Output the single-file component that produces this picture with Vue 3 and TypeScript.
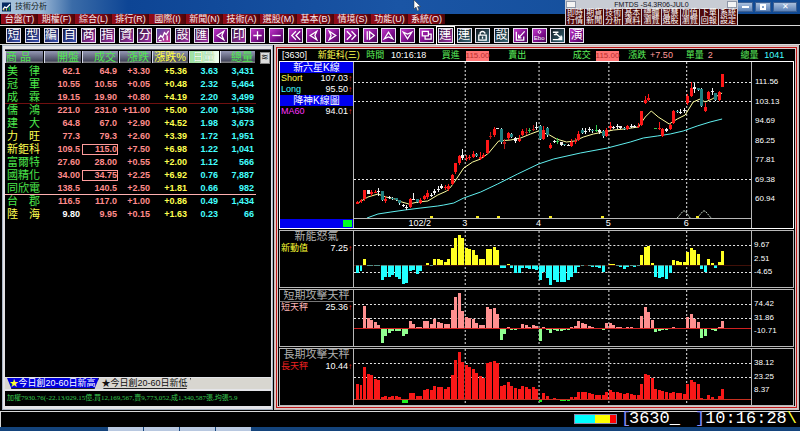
<script setup lang="ts">
interface Tool { label: string; tone: string; glyph?: string; icon?: string; active?: boolean }
interface Quote { name: string; own?: boolean; open: string; flat?: boolean; last: string; boxed?: boolean; diff: string; pct: string; ratio: string; vol: string; rule?: string }
type Candle = [number, number, number, number, number, string]

const menus = ['台盤(T)', '期權(F)', '綜合(L)', '排行(R)', '國際(I)', '新聞(N)', '技術(A)', '選股(M)', '基本(B)', '情境(S)', '功能(U)', '系統(O)']

const arrows: Record<string, string> = {
  left: 'M10.500 2.500 3.500 7 10.500 11.500 8.500 7Z',
  right: 'M3.500 2.500 10.500 7 3.500 11.500 5.500 7Z',
  first: 'M7.500 2.500 3 7 7.500 11.500M12 2.500 7.500 7 12 11.500',
  last: 'M2 2.500 6.500 7 2 11.500M7 2.500 11.500 7 7 11.500',
  play: 'M3.500 2.500V11.500M6 3 11 7 6 11Z',
  up: 'M2.500 10.500 7 3.500 11.500 10.500 7 8.500Z',
  down: 'M2.500 3.500 7 10.500 11.500 3.500 7 5.500Z',
  plus: 'M7 2.500V11.500M2.500 7H11.500',
  minus: 'M2.500 7H11.500',
  copy: 'M2.500 2.500H9V7.500H2.500ZM5.500 8V11H12V5.500H9',
  wave: 'M1.500 11 4 7 6 9 8 4 10 6 12.500 2M2 12.500H5M7 10V12.500M11 7V12',
  lock: 'M4.500 6.500V4Q7 1.500 9.500 4V5M3 6.500H11V12H3ZM7 8V10.500',
  edit: 'M2.500 3V12H10.500V8M5.500 9 11.500 2.500M5 6V9.500H8',
  user: 'M5 3.500Q7 0.500 9 3.500Q9 6 7 6Q5 6 5 3.500',
  pointer: 'M2 3.500H8M3 6H6M2 11.500H11.500V8M5 4.500 11 10M8 10.500H11V7',
}

const tools: Tool[] = [
  { label: '短線', tone: 'blue', glyph: '短' }, { label: '型態', tone: 'blue', glyph: '型' },
  { label: '編輯', tone: 'blue', glyph: '編' }, { label: '自選', tone: 'blue', glyph: '自' },
  { label: '商品', tone: 'plum', glyph: '商' }, { label: '指標', tone: 'plum', glyph: '指' },
  { label: '資料', tone: 'plum', glyph: '資' }, { label: '分時', tone: 'plum', glyph: '分' },
  { label: '走勢', tone: 'rose', icon: 'wave' }, { label: '設定', tone: 'plum', glyph: '設' },
  { label: '匯出', tone: 'plum', glyph: '匯' }, { label: '返回', tone: 'violet', icon: 'left' },
  { label: '列印', tone: 'plum', glyph: '印' }, { label: '放大', tone: 'violet', icon: 'plus' },
  { label: '縮小', tone: 'violet', icon: 'minus' }, { label: '最前', tone: 'violet', icon: 'first' },
  { label: '向前', tone: 'violet', icon: 'left' }, { label: '向後', tone: 'violet', icon: 'right' },
  { label: '最後', tone: 'violet', icon: 'last' }, { label: '播放', tone: 'violet', icon: 'play' },
  { label: '向上', tone: 'violet', icon: 'up' }, { label: '向下', tone: 'violet', icon: 'down' },
  { label: '複製', tone: 'violet', icon: 'copy' }, { label: '連動', tone: 'plum', glyph: '連', active: true },
  { label: '連線', tone: 'teal', glyph: '連' }, { label: '鎖定', tone: 'teal', icon: 'lock' },
  { label: '畫線設定', tone: 'teal', glyph: '設' }, { label: '畫線', tone: 'violet', icon: 'edit' },
  { label: '電子書', tone: 'violet', icon: 'user', glyph: 'Ebo' }, { label: '指向', tone: 'teal', icon: 'pointer' },
  { label: '演算', tone: 'violet', glyph: '演' },
]

const shortcuts = [['即時', '行情'], ['期貨', '新聞'], ['技術', '分析'], ['基本', '資料'], ['總體', '瀏覽'], ['智慧', '選股'], ['加值', '瀏覽'], ['下單', '回報'], ['系統', '設定']]

const heads = ['商 品', '開盤', '成交', '漲跌', '漲跌%', '日量', '總量']
const quotes: Quote[] = [
  { name: '美　律', open: '62.1', last: '64.9', diff: '+3.30', pct: '+5.36', ratio: '3.63', vol: '3,431' },
  { name: '冠　軍', open: '10.55', last: '10.55', diff: '+0.05', pct: '+0.48', ratio: '2.32', vol: '5,464' },
  { name: '成　霖', open: '19.15', last: '19.90', diff: '+0.80', pct: '+4.19', ratio: '2.20', vol: '3,499', rule: 'dim' },
  { name: '儒　鴻', open: '221.0', last: '231.0', diff: '+11.00', pct: '+5.00', ratio: '2.00', vol: '1,536' },
  { name: '建　大', open: '64.8', last: '67.0', diff: '+2.90', pct: '+4.52', ratio: '1.98', vol: '3,673' },
  { name: '力　旺', own: true, open: '77.3', last: '79.3', diff: '+2.60', pct: '+3.39', ratio: '1.72', vol: '1,951' },
  { name: '新鉅科', own: true, open: '109.5', last: '115.0', boxed: true, diff: '+7.50', pct: '+6.98', ratio: '1.22', vol: '1,041' },
  { name: '富爾特', open: '27.60', last: '28.00', diff: '+0.55', pct: '+2.00', ratio: '1.12', vol: '566' },
  { name: '國精化', open: '34.00', last: '34.75', boxed: true, diff: '+2.25', pct: '+6.92', ratio: '0.76', vol: '7,887' },
  { name: '同欣電', open: '138.5', last: '140.5', diff: '+2.50', pct: '+1.81', ratio: '0.66', vol: '982', rule: 'bright' },
  { name: '台　郡', open: '116.5', last: '117.0', diff: '+1.00', pct: '+0.86', ratio: '0.49', vol: '1,434' },
  { name: '陸　海', own: true, open: '9.80', flat: true, last: '9.95', diff: '+0.15', pct: '+1.63', ratio: '0.23', vol: '66' },
]

const left = 353
const plotWidth = 398
const barX = (i: number): number => 355 + 3.52 * i
const months = [{ x: 419, text: '102/2' }, { x: 464, text: '3' }, { x: 538, text: '4' }, { x: 608, text: '5' }, { x: 686, text: '6' }]
const gridX = [464, 538, 608, 686]
const percent = (x: number): string => `${((x - left) / plotWidth) * 100}%`

// index, high, body top, body bottom, low, colour key
const candles: Candle[] = [
  [0, 201, 202, 204, 204, 'r'], [1, 199, 200, 202, 203, 'r'], [2, 190, 190, 199, 201, 'r'], [3, 190, 190, 194, 194, 'w'],
  [4, 190, 192, 194, 196, 'r'], [5, 190, 192, 192, 193, 'r'], [6, 188, 191, 191, 196, 'w'], [7, 191, 191, 200, 201, 't'],
  [8, 196, 199, 201, 203, 'r'], [9, 196, 197, 198, 199, 'w'], [10, 197, 198, 199, 200, 't'], [11, 198, 198, 200, 201, 't'],
  [12, 200, 200, 203, 205, 't'], [13, 204, 205, 206, 207, 'w'], [14, 205, 207, 208, 210, 'w'], [15, 198, 199, 207, 208, 'r'],
  [16, 193, 199, 199, 200, 'w'], [17, 199, 199, 202, 203, 't'], [18, 198, 200, 203, 204, 'r'], [19, 195, 196, 199, 200, 'r'],
  [20, 190, 193, 197, 199, 'r'], [21, 193, 195, 196, 197, 'w'], [22, 189, 191, 193, 195, 'w'], [23, 186, 189, 190, 192, 'w'],
  [24, 184, 186, 188, 189, 'w'], [25, 185, 187, 188, 190, 'r'], [26, 184, 186, 189, 191, 'r'], [27, 174, 175, 184, 185, 'r'],
  [28, 163, 163, 172, 174, 'r'], [29, 155, 156, 163, 165, 'r'], [30, 149, 155, 158, 160, 'w'], [31, 155, 158, 159, 161, 'r'],
  [32, 155, 157, 158, 160, 'r'], [33, 151, 154, 157, 158, 'r'], [34, 153, 154, 156, 157, 't'], [35, 152, 157, 159, 160, 'r'],
  [36, 153, 155, 157, 158, 'r'], [37, 140, 140, 153, 154, 'r'], [38, 132, 136, 137, 139, 'd'], [39, 127, 129, 135, 137, 'r'],
  [40, 128, 128, 129, 129, 'w'], [41, 128, 129, 142, 144, 't'], [42, 139, 142, 144, 149, 'd'], [43, 132, 133, 138, 140, 'r'],
  [44, 133, 134, 137, 138, 't'], [45, 137, 138, 141, 143, 'w'], [46, 135, 139, 141, 142, 'r'], [47, 129, 131, 135, 136, 'r'],
  [48, 128, 132, 133, 135, 'd'], [49, 128, 130, 131, 133, 'g'], [50, 125, 129, 130, 131, 'd'], [51, 122, 127, 128, 130, 'w'],
  [52, 125, 126, 139, 140, 't'], [53, 126, 130, 139, 140, 'r'], [54, 127, 128, 135, 137, 't'], [55, 143, 145, 148, 149, 'r'],
  [56, 140, 141, 142, 143, 'w'], [57, 138, 141, 142, 144, 'g'], [58, 142, 142, 145, 146, 'w'], [59, 144, 144, 145, 146, 't'],
  [60, 144, 145, 146, 146, 'w'], [61, 139, 142, 146, 147, 'r'], [62, 138, 141, 142, 144, 'r'], [63, 131, 134, 140, 141, 'r'],
  [64, 128, 130, 133, 134, 't'], [65, 128, 131, 132, 134, 'w'], [66, 127, 129, 130, 132, 'w'], [67, 129, 130, 131, 133, 't'],
  [68, 125, 130, 131, 132, 'g'], [69, 129, 130, 132, 134, 'w'], [70, 130, 131, 136, 138, 't'], [71, 128, 130, 136, 137, 'r'],
  [72, 122, 126, 128, 130, 'r'], [73, 126, 127, 128, 129, 'w'], [74, 124, 126, 127, 129, 'w'], [75, 126, 126, 128, 129, 'w'],
  [76, 127, 128, 129, 130, 't'], [77, 125, 126, 129, 130, 'r'], [78, 124, 126, 127, 128, 'w'], [79, 125, 126, 127, 128, 'w'],
  [80, 123, 126, 127, 128, 'r'], [81, 111, 111, 125, 126, 'r'], [82, 96, 100, 103, 104, 'r'], [83, 94, 98, 100, 101, 'r'],
  [85, 128, 128, 129, 129, 'g'], [86, 122, 128, 129, 130, 'r'], [87, 128, 129, 136, 137, 'r'], [88, 128, 129, 131, 132, 'w'],
  [89, 124, 125, 129, 130, 'r'], [90, 110, 111, 123, 124, 'r'], [91, 110, 111, 112, 113, 't'], [92, 109, 112, 113, 114, 'w'],
  [93, 108, 110, 111, 113, 'w'], [94, 94, 96, 103, 105, 'r'], [95, 82, 88, 96, 97, 'r'], [96, 83, 87, 89, 93, 'w'],
  [97, 88, 88, 90, 91, 't'], [98, 88, 89, 106, 107, 't'], [99, 103, 107, 111, 112, 'r'], [100, 91, 92, 99, 100, 'r'],
  [101, 88, 91, 92, 95, 'w'], [102, 93, 93, 100, 101, 't'], [103, 91, 92, 100, 101, 'r'], [104, 74, 74, 87, 87, 'r'],
]

const shortLine = '357,203 367,197 377,194 385,197 394,199 401,202 408,204 417,202 427,201 437,195 446,191 450,187 455,180 463,168 472,162 480,159 488,153 498,141 510,140 520,138 530,134 538,131 549,135 556,139 566,142 574,141 583,137 593,134 603,132 613,130 624,129 638,127 645,117 651,111 658,117 669,124 677,119 685,115 693,102 700,99 705,102 712,99 722,93'
const longLine = '366,218 377,214 390,212 404,210 420,208 437,206 443,205 453,203 463,198 480,192 497,184 517,174 538,164 553,159 580,153 607,148 630,142 643,138 657,136 670,134 683,131 697,126 710,122 722,119'
const marks = [429, 475, 496, 548, 601, 696]

const strengths = [
  { title: '新能怒氣', name: '新動值', value: '7.25', cls: 'power', zero: 34, grid: [15, 42], axis: ['9.67', '2.51', '-4.65'],
    data: [-8, -6, 6, -1, -1, -1, -1, -15, -12, -12, -10, -12, -14, -19, -18, -6, -5, -9, -6, 0, 2, -1, 6, 6, 5, 3, 6, 17, 27, 30, 27, 17, 16, 15, 10, 6, 6, 16, 16, 18, 15, -3, -3, 1, -3, -8, -8, -3, -3, -4, -4, -5, -15, -7, -13, -20, -15, -17, -17, -17, -15, -12, -8, -2, -1, 0, -1, -2, -2, -3, -7, 0, 1, 1, -1, -2, -4, -2, -1, -2, -1, 10, 18, 19, 2, -12, -13, -12, -14, -8, 5, 4, 3, 3, 13, 17, 15, 11, -4, -7, 6, 2, -3, 3, 14] },
  { title: '短期攻擊天秤', name: '短天秤', value: '25.36', cls: 'swift', zero: 38, grid: [15, 29], axis: ['74.42', '31.86', '-10.71'],
    data: [-1, 0, 22, 10, 8, 6, 3, -15, -8, -5, -3, -3, -3, -8, -6, 7, 4, 1, 1, 7, 7, 4, 9, 6, 5, 4, 4, 18, 31, 35, 17, 11, 10, 9, 5, 3, 3, 21, 19, 20, 14, -12, -6, 1, -2, -2, -1, 4, 3, 1, 3, 2, -13, 1, -2, -5, -2, -3, -3, -2, -2, 1, 2, 7, 5, 4, 2, 1, 0, 0, -2, 5, 5, 3, 1, 1, 0, 1, 1, 0, 0, 12, 21, 16, 8, -4, -3, -2, -2, -1, 1, 0, 0, 0, 11, 14, 9, 6, -10, -8, 0, -2, -3, 1, 7] },
  { title: '長期攻擊天秤', name: '長天秤', value: '10.44', cls: 'slow', zero: 50, grid: [15, 29], axis: ['38.12', '23.25', '8.37'],
    data: [15, 14, 32, 25, 24, 20, 19, 2, 3, 2, 3, 3, 2, -4, -4, 6, 6, 3, 3, 9, 10, 9, 13, 12, 12, 10, 12, 24, 39, 47, 37, 34, 32, 30, 26, 23, 21, 36, 37, 38, 36, 13, 14, 17, 13, 11, 10, 13, 12, 10, 12, 10, -3, 6, 3, 0, 1, 0, -2, -2, -2, 2, 2, 7, 7, 7, 6, 5, 4, 4, 4, 7, 9, 7, 7, 6, 5, 6, 5, 4, 4, 15, 25, 24, 21, 10, 9, 8, 7, 6, 7, 6, 6, 5, 15, 19, 17, 15, 1, 0, 4, 2, 0, 3, 10] },
]
const priceAxis = ['111.56', '103.13', '94.69', '86.25', '77.81', '69.38', '60.94']
</script>

<template>
  <div class="app">
    <header class="titlebar">
      <svg class="logo" viewBox="0 0 10 10" aria-hidden="true">
        <rect width="10" height="10" fill="#062a60" />
        <path d="M1 8 3 5 5 6 9 2" fill="none" stroke="#fff" stroke-width="1.500" />
        <path d="M2 9V7M5 9V7" stroke="#ffe030" />
        <path d="M8 9V5" stroke="#20d040" />
      </svg>
      <h1>技術分析</h1>
      <div class="winctl">
        <button type="button" aria-label="最小化"><i class="min"></i></button>
        <button type="button" aria-label="還原"><i class="restore"></i></button>
        <button type="button" aria-label="關閉" class="close">✕</button>
      </div>
    </header>

    <nav class="menubar">
      <button v-for="m in menus" :key="m" type="button">{{ m }}</button>
    </nav>

    <div class="toolbar">
      <div class="tools">
        <button v-for="t in tools" :key="t.label" type="button" :aria-label="t.label" :class="[t.tone, { active: t.active, mini: t.glyph === 'Ebo' }]">
          <svg v-if="t.icon" viewBox="0 0 14 14" aria-hidden="true"><path :d="arrows[t.icon]" /></svg>
          <span v-if="t.glyph">{{ t.glyph }}</span>
        </button>
      </div>
    </div>

    <aside class="float">
      <div class="float-title"><i></i><span>FMTDS -S4.3R06-JUL0</span><i></i></div>
      <div class="float-keys">
        <button v-for="s in shortcuts" :key="s[1] + s[0]" type="button"><span>{{ s[0] }}</span><span>{{ s[1] }}</span></button>
      </div>
    </aside>
    <svg class="cursor" viewBox="0 0 8 12" aria-hidden="true"><path d="M1 0V9L3 7 4.500 11 6 10 4.500 6.500H7.500Z" fill="#fff" stroke="#333" stroke-width="0.500" /></svg>

    <main class="work">
      <section class="list">
        <div class="sheet">
          <table>
            <colgroup><col class="c0"><col class="c1"><col class="c2"><col class="c3"><col class="c4"><col class="c5"><col class="c6"><col></colgroup>
            <thead>
              <tr>
                <th v-for="(h, i) in heads" :key="h" scope="col" :class="{ pct: i === 4, sorted: i === 5, first: i === 0 }"><span>{{ h }}</span></th>
                <td class="thumbs"><button type="button" aria-label="欄位捲動">≋</button></td>
              </tr>
            </thead>
            <tbody>
              <tr v-for="q in quotes" :key="q.name" :class="q.rule">
                <th scope="row" :class="{ own: q.own }">{{ q.name }}</th>
                <td :class="{ flat: q.flat }">{{ q.open }}</td>
                <td><span :class="{ boxed: q.boxed }">{{ q.last }}</span></td>
                <td>{{ q.diff }}</td>
                <td class="yellow">{{ q.pct }}</td>
                <td class="cyan">{{ q.ratio }}</td>
                <td class="cyan">{{ q.vol }}</td>
                <td class="void"></td>
              </tr>
            </tbody>
          </table>
        </div>
        <div class="tabs">
          <button type="button" class="tab on"><b>★</b>今日創20-60日新高</button>
          <button type="button" class="tab"><b>★</b>今日創20-60日新低</button>
        </div>
        <p class="ticker">加權7930.76(-22.13/029.15億,買12,169,567,賣9,773,052,成1,340,587張,均張5.9</p>
      </section>

      <section class="chart">
        <div class="info">
          <span>[3630]</span><span class="yellow">新鉅科(三)</span><span class="green">時間</span><span>10:16:18</span>
          <span class="green">買進</span><span><mark>115.00</mark></span><span class="green">賣出</span>
          <span class="green">成交</span><span><mark>115.00</mark></span><span class="green">漲跌</span><span class="pink">+7.50</span>
          <span class="green">單量</span><span class="pink">2</span><span class="green">總量</span><span class="cyan">1041</span>
        </div>

        <div class="pane price">
          <div class="legend">
            <h2>新六星K線</h2>
            <p><span class="yellow">Short</span><span>107.03<em>↑</em></span></p>
            <p><span class="cyan">Long</span><span>95.50<em>↑</em></span></p>
            <h2>降神K線圖</h2>
            <p><span class="magenta">MA60</span><span>94.01<em>↑</em></span></p>
            <div class="slider"><i></i></div>
          </div>
          <div class="plot">
            <svg viewBox="353 62 398 156" preserveAspectRatio="none" role="img" aria-label="日K線圖">
              <g class="grid">
                <path v-for="y in [82, 101, 179]" :key="y" :d="`M353 ${y + 0.5}H751`" />
                <path v-for="x in gridX" :key="x" :d="`M${x + 0.5} 62V218`" />
              </g>
              <polyline class="long" :points="longLine" />
              <polyline class="short" :points="shortLine" />
              <g v-for="c in candles" :key="c[0]" :class="c[5]">
                <rect :x="barX(c[0]) + 1" :y="c[1]" width="1" :height="Math.max(1, c[4] - c[1])" />
                <rect class="body" :x="barX(c[0])" :y="c[2]" width="3" :height="Math.max(1, c[3] - c[2])" />
              </g>
              <path class="peaks" d="M677 218 683 211H685L690 218M697 218 703 211H705L711 218" />
              <rect v-for="x in marks" :key="x" class="spot" :x="x" y="216" width="3" height="2" />
            </svg>
            <div class="months"><span v-for="m in months" :key="m.x" :style="{ left: percent(m.x) }">{{ m.text }}</span></div>
          </div>
          <div class="scale"><span v-for="a in priceAxis" :key="a">{{ a }}</span></div>
        </div>

        <div v-for="s in strengths" :key="s.name" class="pane power-pane" :class="s.cls">
          <div class="legend">
            <h3>{{ s.title }}</h3>
            <p><span class="name">{{ s.name }}</span><span>{{ s.value }}<em>↑</em></span></p>
          </div>
          <div class="plot">
            <svg viewBox="353 0 398 56" preserveAspectRatio="none" role="img" :aria-label="s.title">
              <g class="grid">
                <path v-for="y in s.grid" :key="y" :d="`M353 ${y - 0.5}H751`" />
                <path v-for="x in gridX" :key="x" :d="`M${x + 0.5} 0V56`" />
              </g>
              <rect v-for="(v, i) in s.data" :key="i" :class="v < 0 ? 'neg' : 'pos'" :x="barX(i)" :y="v < 0 ? s.zero : s.zero - v" width="3" :height="Math.abs(v)" />
              <rect class="zero" x="353" :y="s.zero" width="398" height="1" />
            </svg>
          </div>
          <div class="scale"><span v-for="a in s.axis" :key="a">{{ a }}</span></div>
        </div>
      </section>
    </main>

    <footer class="status">
      <div class="meter" aria-hidden="true"><i></i><i></i><i></i></div>
      <label class="code"><span class="open">[</span><input type="text" value="3630_" aria-label="商品代碼"><span>]</span></label>
      <time>10:16:28</time><span class="spin">\</span>
    </footer>
    <div class="taskbar"><i></i><i></i><i></i><i></i></div>
  </div>
</template>

<style>
body { background: #000; }
</style>

<style scoped>
* { box-sizing: border-box; }
.app {
  position: relative;
  display: flex;
  flex-direction: column;
  min-height: 100vh;
  overflow: hidden;
  background: #000;
  color: #fff;
  font: 9px/10px "Liberation Sans", "Noto Sans CJK TC", sans-serif;
}
button {
  margin: 0;
  padding: 0;
  border: 0;
  background: none;
  color: inherit;
  font: inherit;
}
h1, h2, h3, p { margin: 0; font: inherit; }
.yellow { color: #ffff50; }
.cyan { color: #4ff; }
.green { color: #5cf05c; }
.pink { color: #ff9c9c; }
.magenta { color: #f3f; }

.titlebar {
  display: flex;
  align-items: center;
  gap: 4px;
  height: 14px;
  padding-left: 2px;
  background: linear-gradient(90deg, #a9c4dc 0, #9db9d6 5%, #3b6ca8 9%, #0d4595 16%, #1a55a5 50%, #104a94 100%);
}
.logo { width: 9px; height: 10px; }
h1 { color: #101820; font-size: 8px; }
.winctl { display: flex; gap: 2px; margin-left: auto; padding-right: 3px; }
.winctl button {
  display: grid;
  place-items: center;
  width: 16px;
  height: 10px;
  border: 1px solid #3c5f92;
  background: linear-gradient(#a9bfdc, #5d83b8);
  font-size: 8px;
  line-height: 8px;
}
.winctl .close { width: 24px; }
.min { width: 7px; height: 2px; background: #fff; }
.restore { width: 6px; height: 6px; border: 2px solid #fff; }

.menubar { display: flex; height: 10px; padding-left: 1px; }
.menubar button {
  width: 37px;
  background: linear-gradient(90deg, #900c18, #7c0814 70%, #4a0509);
  color: #f4ecec;
  line-height: 10px;
  white-space: nowrap;
}

.toolbar {
  margin-top: 1px;
  border-top: 1px solid #d8d8d8;
  border-bottom: 1px solid #d8d8d8;
  background: #000;
  padding: 0 6px;
}
.tools {
  display: grid;
  grid-template-columns: repeat(31, 1fr);
  align-items: center;
  max-width: 582px;
  height: 18px;
}
.tools button {
  position: relative;
  display: grid;
  place-items: center;
  width: 15px;
  height: 15px;
  border: 1px solid #e8e4f0;
  font-size: 12px;
  line-height: 13px;
  overflow: hidden;
}
.tools button span { display: block; margin: -2px; }
.blue { background: linear-gradient(135deg, #16163c, #3850b0); }
.plum { background: linear-gradient(135deg, #301438, #a032a8); }
.violet { background: linear-gradient(135deg, #c038c8, #780c88 60%, #4a0858); }
.rose { background: linear-gradient(135deg, #5048a0, #d03090); }
.teal { background: linear-gradient(135deg, #101820, #386878); }
.tools .active { outline: 1px solid #fff; outline-offset: 1px; }
.tools svg { width: 13px; height: 13px; }
.tools path { fill: none; stroke: #fff; stroke-width: 1.4; }
.tools .mini { align-content: center; font-size: 6px; line-height: 5px; }
.tools .mini svg { height: 10px; margin-bottom: -3px; }
.tools .mini span { margin: 0; }

.float {
  position: absolute;
  top: 0;
  right: 62px;
  width: 173px;
  background: #c8ccd4;
}
.float-title {
  display: flex;
  justify-content: space-between;
  height: 9px;
  padding: 1px;
  color: #101020;
  font-size: 7px;
  line-height: 7px;
}
.float-title i { width: 10px; border: 1px solid #9098a8; background: #f4f4f4; }
.float-keys { display: grid; grid-template-columns: repeat(9, 1fr); gap: 1px; padding: 0 1px 1px; }
.float-keys button {
  display: flex;
  flex-direction: column;
  align-items: center;
  height: 16px;
  background: #500a0a;
  font-size: 8px;
  line-height: 8px;
}
.cursor { position: absolute; top: 0; left: 413px; width: 8px; height: 12px; }

.work { display: flex; flex: 1; padding: 0 1px 1px 2px; background: #000; }
.list {
  display: flex;
  flex-direction: column;
  flex: 0 0 34%;
  min-width: 0;
  padding: 3px 1px 3px 2px;
  border: 1px solid #a8b4c4;
  background: #e4e4e8;
}
.sheet { flex: 1; background: #000; border-top: 1px solid #556; }
table { width: 100%; border-collapse: collapse; table-layout: fixed; }
.c0 { width: 39px; } .c1 { width: 38px; } .c2 { width: 37px; } .c3 { width: 33px; }
.c4 { width: 37px; } .c5 { width: 31px; } .c6 { width: 36px; }
thead th {
  height: 13px;
  padding: 0 1px 0 0;
  color: #50e850;
  font-size: 11px;
  font-weight: 400;
  line-height: 12px;
  text-align: right;
}
thead th span { display: block; border-left: 1px solid #d8dcec; background: linear-gradient(#9498b4, #484a60 80%, #888); padding-right: 2px; white-space: nowrap; }
thead .first { text-align: left; }
thead .pct { color: #ffff40; }
thead .sorted span { background: linear-gradient(90deg, #9ee09e, #f2fff2); color: #fff; text-shadow: 0 0 1px #30a030; text-align: center; }
thead .thumbs { text-align: right; line-height: 12px; }
.thumbs button { width: 10px; height: 12px; border: 1px solid #888; background: #ddd; color: #111; text-align: center; line-height: 9px; }
tbody th, tbody td {
  height: 13px;
  padding: 0 2px 0 0;
  color: #ff8c8c;
  font-weight: 700;
  font-size: 9px;
  line-height: 12px;
  text-align: right;
}
tbody th { padding: 0 0 0 2px; color: #4ce84c; font-size: 11px; font-weight: 400; text-align: left; white-space: nowrap; }
tbody .own, tbody .yellow { color: #ffff50; }
tbody .cyan { color: #4ff; }
tbody .flat { color: #fff; }
.boxed { display: block; margin-right: -1px; line-height: 9px; border: 1px solid #ff9c9c; }
.dim th, .dim td:not(.void) { border-bottom: 1px solid #701010; }
.bright th, .bright td:not(.void) { border-bottom: 1px solid #ffb0b0; }

.tabs { display: flex; height: 11px; background: #d8d6d0; margin-top: 1px; padding-left: 2px; }
.tab {
  flex: 0 0 92px;
  border-right: 1px solid #222;
  border-bottom: 1px solid #222;
  background: #d8d6d0;
  color: #111;
  line-height: 10px;
  white-space: nowrap;
  clip-path: polygon(0 0, 100% 0, 95% 100%, 5% 100%);
}
.tab.on { background: #00d; color: #fff; }
.tab b { font-weight: 400; }
.tab.on b { color: #ffff30; }
.ticker {
  margin-top: 2px;
  height: 15px;
  padding-left: 2px;
  background: #000;
  color: #38c850;
  font: 7px/15px "Liberation Serif", "Noto Sans CJK TC", serif;
  white-space: nowrap;
  overflow: hidden;
}

.chart {
  flex: 1;
  min-width: 0;
  margin-left: 1px;
  padding: 3px 4px;
  border: 1px solid #c8b8b8;
  outline: 1px solid #c01818;
  outline-offset: -3px;
  box-shadow: inset 0 0 0 3px #d8c8c8;
}
.info {
  display: grid;
  grid-template-columns: 36fr 49fr 25fr 51fr 24fr 43fr 65fr 23fr 33fr 22fr 36fr 22fr 33fr 24fr 30fr;
  align-items: center;
  height: 13px;
  padding-left: 3px;
  border-bottom: 1px solid #fff;
  background: #000;
  white-space: nowrap;
}
.info span { min-width: 0; width: 0; }
mark { display: inline-block; background: #ff7474; color: #b83030; font-size: 8px; line-height: 10px; }
.pane { display: flex; border: 1px solid #b8b8b8; background: #000; }
.price { border-color: #fff; border-top: 0; }
.legend { flex: 0 0 74px; border-right: 1px solid #b8b8b8; display: flex; flex-direction: column; }
h2 { height: 11px; background: #00e; text-align: center; font-size: 10px; line-height: 11px; color: #fff; }
.legend p { display: flex; justify-content: space-between; padding: 0 1px; line-height: 10px; white-space: nowrap; }
.legend em { color: #e02020; font-style: normal; display: inline-block; width: 4px; font-size: 8px; }
.slider { margin-top: auto; height: 9px; background: #00e; display: flex; justify-content: flex-end; padding: 1px; }
.slider i { width: 9px; background: #0f2; }
.plot { flex: 1; min-width: 0; }
.plot svg { display: block; width: 100%; height: 56px; shape-rendering: crispEdges; }
.price .plot svg { height: 156px; }
.months { position: relative; height: 10px; border-top: 1px solid #b8b8b8; line-height: 9px; }
.months span { position: absolute; transform: translateX(-50%); }
.scale {
  flex: 0 0 42px;
  display: flex;
  flex-direction: column;
  justify-content: space-between;
  padding: 9px 0 10px 2px;
  border-left: 1px solid #b8b8b8;
  font-size: 8px;
}
.price .scale { padding: 15px 0 24px 3px; }
.grid path { stroke: #e8e8e8; stroke-dasharray: 2 2; }
.long { fill: none; stroke: #60f0f0; }
.short { fill: none; stroke: #ffffa0; }
.peaks { fill: none; stroke: #c8d8c8; stroke-dasharray: 2 1; }
.spot { fill: #f4e820; }
.r { fill: #ff1818; } .d { fill: #c01818; } .t { fill: #d8f0f0; } .w { fill: #f0f0f0; } .g { fill: #30c850; }
.t .body { fill: #208080; }
.power-pane { margin-top: 1px; height: 58px; }
h3 { color: #b0b0b0; text-align: center; font-size: 11px; line-height: 11px; border-bottom: 1px solid #777; }
.power h3 { border-color: transparent; }
.slow h3 { border-color: transparent; }
.power .name { color: #ff3; } .swift .name { color: #ffb8b8; } .slow .name { color: #e82020; }
.power .pos { fill: #ff2; } .power .neg { fill: #2ff; } .power .zero { fill: #80201080; }
.swift .pos { fill: #ff9090; } .swift .neg { fill: #90ff90; } .swift .zero { fill: #d02020; }
.slow .pos { fill: #f81818; } .slow .neg { fill: #20f020; } .slow .zero { fill: #c83020; }

.status {
  display: flex;
  align-items: center;
  justify-content: flex-end;
  height: 16px;
  padding: 0 3px 2px 0;
  border-top: 1px solid #d8d8d8;
  border-left: 1px solid #d8d8d8;
  font: 17px/13px "Liberation Mono", monospace;
}
.meter { display: flex; width: 43px; height: 10px; margin-right: 4px; border: 1px solid #88a; }
.meter i { flex: 7; background: #0ff; }
.meter i:nth-child(2) { flex: 5; background: #ff0; }
.meter i:nth-child(3) { flex: 2; background: #f00; }
.code { display: flex; color: #8890ff; }
.code .open { width: 8px; }
.code input {
  width: 66px;
  height: 13px;
  margin: 0;
  padding: 0;
  border: 0;
  background: none;
  color: #fff;
  font: inherit;
}
.spin { color: #ffff30; }
.taskbar { display: flex; gap: 1px; height: 4px; padding-left: 108px; background: #14447c; }
.taskbar i { width: 35px; background: #b8c8e0; }
</style>
